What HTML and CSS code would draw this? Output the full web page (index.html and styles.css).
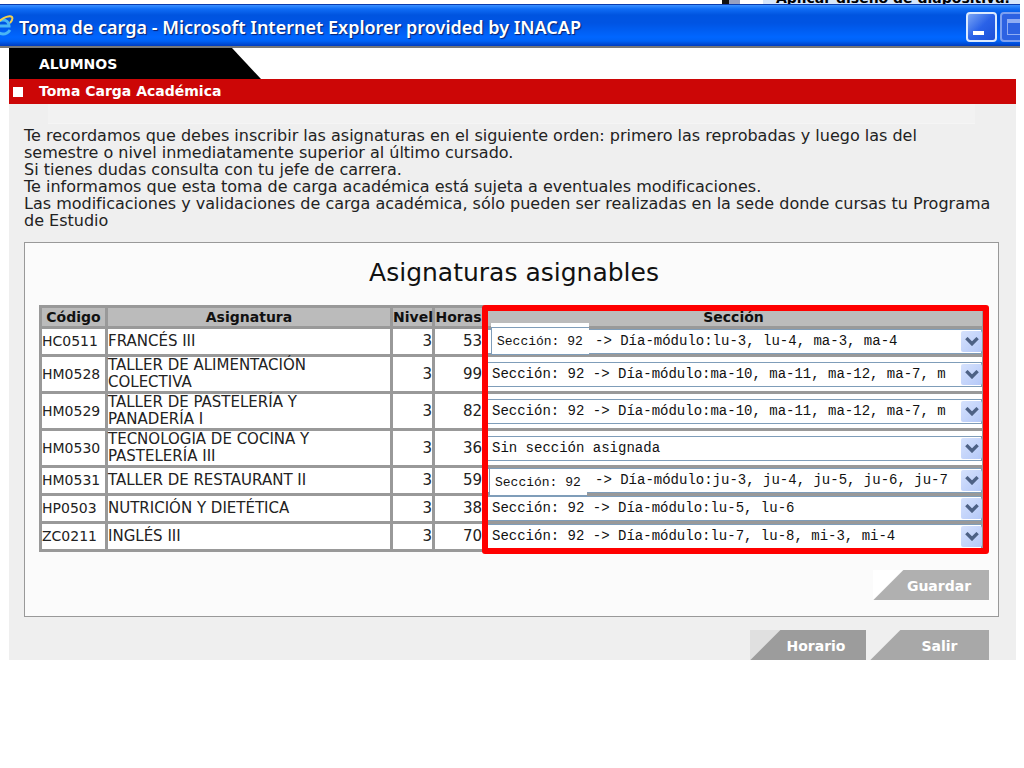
FILE: index.html
```html
<!DOCTYPE html>
<html lang="es">
<head>
<meta charset="utf-8">
<title>Toma de carga</title>
<link rel="stylesheet" href="styles.css">
</head>
<body>
<div class="backdrop"><span class="dark"></span><span class="shade"></span><div class="pane">Aplicar diseño de diapositiva.</div></div>
<header class="titlebar">
  <svg class="ie" viewBox="0 0 14 24" aria-hidden="true">
    <path d="M-3 11H9C9 7 6 5 3 5-1 5-4 8-4 12c0 4 3 7 7 7 3 0 5-1 7-4" fill="none" stroke="#49b5f5" stroke-width="3"/>
    <path d="M-2 7C4 2 10 0 12 2c1 2 0 4-2 6" fill="none" stroke="#f0cf50" stroke-width="2"/>
  </svg>
  <h1 class="wintitle">Toma de carga - Microsoft Internet Explorer provided by INACAP</h1>
  <div class="winbtns">
    <button class="winbtn" aria-label="Minimizar"><span class="dash"></span></button>
    <button class="winbtn faded" aria-label="Maximizar"><span class="square"></span></button>
  </div>
</header>
<main class="page">
  <div class="tab">ALUMNOS</div>
  <h2 class="section"><span class="bullet"></span>Toma Carga Académica</h2>
  <div class="panel">
    <div class="band"></div>
    <p class="notice">Te recordamos que debes inscribir las asignaturas en el siguiente orden: primero las reprobadas y luego las del<br>semestre o nivel inmediatamente superior al último cursado.<br>Si tienes dudas consulta con tu jefe de carrera.<br>Te informamos que esta toma de carga académica está sujeta a eventuales modificaciones.<br>Las modificaciones y validaciones de carga académica, sólo pueden ser realizadas en la sede donde cursas tu Programa<br>de Estudio</p>
    <form class="box">
      <h3 class="caption">Asignaturas asignables</h3>
      <div class="tablewrap">
        <table class="courses">
          <colgroup><col class="c-code"><col class="c-name"><col class="c-level"><col class="c-hours"><col></colgroup>
          <thead><tr class="head"><th>Código</th><th>Asignatura</th><th>Nivel</th><th>Horas</th><th>Sección</th></tr></thead>
          <tbody>
            <tr class="short"><td>HC0511</td><td class="name">FRANCÉS III</td><td class="num">3</td><td class="num">53</td><td><div class="pick"><select class="sel after" aria-label="Sección de Francés III"><option>-&gt; Día-módulo:lu-3, lu-4, ma-3, ma-4</option></select><span class="patch first">Sección: 92</span><span class="arrow"><svg viewBox="0 0 12 8"><path d="M1 1l5 5 5-5"/></svg></span></div></td></tr>
            <tr class="tall"><td>HM0528</td><td class="name">TALLER DE ALIMENTACIÓN<br>COLECTIVA</td><td class="num">3</td><td class="num">99</td><td><div class="pick"><select class="sel" aria-label="Sección de Taller de Alimentación Colectiva"><option>Sección: 92 -&gt; Día-módulo:ma-10, ma-11, ma-12, ma-7, m</option></select><span class="arrow"><svg viewBox="0 0 12 8"><path d="M1 1l5 5 5-5"/></svg></span></div></td></tr>
            <tr class="tall"><td>HM0529</td><td class="name">TALLER DE PASTELERÍA Y<br>PANADERÍA I</td><td class="num">3</td><td class="num">82</td><td><div class="pick"><select class="sel" aria-label="Sección de Taller de Pastelería y Panadería I"><option>Sección: 92 -&gt; Día-módulo:ma-10, ma-11, ma-12, ma-7, m</option></select><span class="arrow"><svg viewBox="0 0 12 8"><path d="M1 1l5 5 5-5"/></svg></span></div></td></tr>
            <tr class="tall"><td>HM0530</td><td class="name">TECNOLOGIA DE COCINA Y<br>PASTELERÍA III</td><td class="num">3</td><td class="num">36</td><td><div class="pick"><select class="sel" aria-label="Sección de Tecnologia de Cocina y Pastelería III"><option>Sin sección asignada</option></select><span class="arrow"><svg viewBox="0 0 12 8"><path d="M1 1l5 5 5-5"/></svg></span></div></td></tr>
            <tr class="short"><td>HM0531</td><td class="name">TALLER DE RESTAURANT II</td><td class="num">3</td><td class="num">59</td><td><div class="pick"><select class="sel after" aria-label="Sección de Taller de Restaurant II"><option>-&gt; Día-módulo:ju-3, ju-4, ju-5, ju-6, ju-7</option></select><span class="patch">Sección: 92</span><span class="arrow"><svg viewBox="0 0 12 8"><path d="M1 1l5 5 5-5"/></svg></span></div></td></tr>
            <tr class="short"><td>HP0503</td><td class="name">NUTRICIÓN Y DIETÉTICA</td><td class="num">3</td><td class="num">38</td><td><div class="pick"><select class="sel" aria-label="Sección de Nutrición y Dietética"><option>Sección: 92 -&gt; Día-módulo:lu-5, lu-6</option></select><span class="arrow"><svg viewBox="0 0 12 8"><path d="M1 1l5 5 5-5"/></svg></span></div></td></tr>
            <tr class="short"><td>ZC0211</td><td class="name">INGLÉS III</td><td class="num">3</td><td class="num">70</td><td><div class="pick"><select class="sel" aria-label="Sección de Inglés III"><option>Sección: 92 -&gt; Día-módulo:lu-7, lu-8, mi-3, mi-4</option></select><span class="arrow"><svg viewBox="0 0 12 8"><path d="M1 1l5 5 5-5"/></svg></span></div></td></tr>
          </tbody>
        </table>
        <div class="marker"></div>
      </div>
      <div class="save"><button type="button" class="cut light">Guardar</button></div>
    </form>
    <div class="actions"><button type="button" class="cut dim">Horario</button><button type="button" class="cut wide">Salir</button></div>
  </div>
</main>
</body>
</html>
```
FILE: styles.css
```css
* { box-sizing: border-box; }
body { margin: 0; background: #fff; color: #222; font: 14px/17px "DejaVu Sans", sans-serif; }
button { font: inherit; border: 0; padding: 0; }

.backdrop { display: flex; justify-content: flex-end; height: 4px; padding-right: 4px; overflow: hidden; }
.dark { width: 7px; background: #111; }
.shade { width: 11px; margin-right: 23px; background: #98a0c0; }
.pane { width: 257px; height: 16px; margin-top: -10px; padding-left: 13px; background: #d6e6fa; color: #000; font: bold 14px/16px "DejaVu Sans", sans-serif; white-space: nowrap; }

.titlebar { display: flex; align-items: center; height: 44px; margin-right: 4px; padding-top: 2px; border-top: 1px solid #0b3cae; border-bottom: 2px solid #777; overflow: hidden;
  background: linear-gradient(#3b91ff 0, #0f6cf5 4px, #0054e0 10px, #0054e3 18px, #0066ff 32px, #0062f5 36px, #003cc0 41px); }
.ie { width: 14px; height: 24px; margin-right: 5px; flex: none; }
.wintitle { flex: 1; margin: 0; color: #fff; font: 600 18px/24px "Noto Sans", sans-serif; text-shadow: 1px 1px 1px #0a2070; white-space: nowrap; }
.winbtns { display: flex; gap: 3px; width: 54px; overflow: hidden; }
.winbtn { position: relative; flex: none; width: 31px; height: 30px; border: 2px solid #dcebff; border-radius: 4px; background: linear-gradient(135deg, #7aa5f5, #2a62e8 50%, #1c50d8); }
.faded { border-color: #7da0f0; background: #2d62e2; }
.dash { position: absolute; left: 5px; bottom: 5px; width: 11px; height: 4px; background: #fff; }
.square { position: absolute; left: 5px; top: 5px; width: 17px; height: 16px; border: 1px solid #8facf3; border-top-width: 4px; }

.page { margin: 0 8px 0 9px; }
.tab { width: 252px; height: 31px; padding: 8px 30px; background: #000; color: #fff; font-weight: bold; clip-path: polygon(0 0, 223px 0, 100% 100%, 0 100%); }
.section { display: flex; align-items: center; height: 25px; margin: 0; background: #cc0606; color: #fff; font-size: 14px; }
.bullet { width: 10px; height: 10px; margin: 0 16px 0 4px; background: #fff; }
.panel { background: #efefef; }
.band { height: 20px; margin: 0 41px 0 39px; background: #f2f2f2; border-bottom: 1px solid #f5f5f5; }
.notice { margin: 0; padding: 3px 0 13px 15px; font-size: 16px; white-space: nowrap; }
.box { margin: 0 17px 0 15px; padding: 14px 9px 16px 14px; background: #fbfbfb; border: 1px solid #999; }
.caption { margin: 0 0 16px; font-size: 25px; line-height: 32px; font-weight: normal; text-align: center; color: #111; }

.tablewrap { position: relative; padding-right: 4px; }
.courses { width: 100%; table-layout: fixed; border-collapse: collapse; background: #fff; }
.c-code { width: 66px; }
.c-name { width: 285px; }
.c-level { width: 42px; }
.c-hours { width: 50px; }
.courses th, .courses td { padding: 0; border: 3px solid #999; white-space: nowrap; }
.courses th { background: #bbb; color: #111; font-weight: bold; line-height: 16px; }
.courses .name { font-size: 15px; }
.head { height: 21px; }
.short { height: 28px; }
.tall { height: 37px; }
.courses .num { font-size: 15px; text-align: right; }
.pick { position: relative; display: flex; }
.sel { flex: 1; min-width: 0; height: 25px; padding: 0 24px 0 6px; appearance: none; border: 1px solid #7f9db9; border-radius: 0; background: #fff; color: #111; font: 14px/17px "Liberation Mono", monospace; }
.after { padding-left: 109px; }
.patch { position: absolute; left: 4px; top: 0; width: 98px; height: 28px; padding: 5px; border: 1px solid #7f9db9; border-right: 0; background: #fff; font: 13px/17px "Liberation Mono", monospace; color: #111; }
.first { left: 6px; top: -2px; box-shadow: 0 -4px #fff; }
.arrow { position: absolute; right: 0; top: 2px; width: 21px; height: 21px; display: grid; place-items: center; border-radius: 2px; background: linear-gradient(135deg, #d6e2fd, #b4c8f8); pointer-events: none; }
.arrow svg { width: 14px; height: 9px; }
.arrow path { fill: none; stroke: #4d6185; stroke-width: 3; }
.marker { position: absolute; top: 0; bottom: -2px; left: 443px; right: 0; border: 6px solid #f00; border-radius: 3px; pointer-events: none; }

.save { display: flex; justify-content: flex-end; padding-top: 18px; }
.actions { display: flex; justify-content: flex-end; gap: 4px; padding: 13px 27px 0 0; }
.cut { width: 116px; height: 30px; padding-left: 16px; color: #fff; font: bold 14px/32px "DejaVu Sans", sans-serif; background: linear-gradient(135deg, #efefef 21px, #a8a8a8 22px); }
.wide { width: 119px; padding-left: 20px; }
.light { background: linear-gradient(135deg, #fff 21px, #b0b0b0 22px); }
.dim { background: linear-gradient(135deg, #e0e0e0 21px, #9c9c9c 22px); }
```
